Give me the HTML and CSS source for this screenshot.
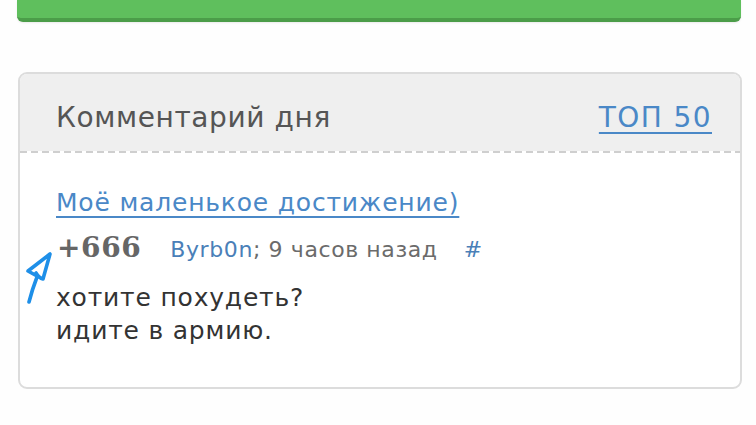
FILE: index.html
```html
<!DOCTYPE html>
<html lang="ru">
<head>
<meta charset="utf-8">
<link rel="stylesheet" href="styles.css">
</head>
<body>
<div class="page">
  <div class="green-bar"></div>
  <section class="widget">
    <header class="widget-head">
      <h2 class="widget-title">Комментарий дня</h2>
      <a class="top-link" href="#">ТОП 50</a>
    </header>
    <div class="dash"></div>
    <div class="widget-body">
      <a class="post-link" href="#">Моё маленькое достижение)</a>
      <div class="meta">
        <span class="rating">+666</span>
        <span class="author"><a href="#" class="user">Byrb0n</a>; 9 часов назад</span>
        <a href="#" class="hash">#</a>
        <svg class="scribble" width="32" height="56" viewBox="0 0 32 56">
          <path d="M4,52 Q7,40 12,27 M12,26 L3,21 L25,4 L18,29 Q14,28 11,23" fill="none" stroke="#1e8fe8" stroke-width="3.6" stroke-linecap="round" stroke-linejoin="round"/>
        </svg>
      </div>
      <p class="comment">хотите похудеть?<br>идите в армию.</p>
    </div>
  </section>
</div>
</body>
</html>
```

FILE: styles.css
```css
html, body {
  margin: 0;
  padding: 0;
  background: #fefefe;
}
.page {
  padding: 0 15px 0 17px;
  font-family: "DejaVu Sans", Verdana, sans-serif;
}
.green-bar {
  height: 18px;
  background: #5fbf5d;
  border-bottom: 4px solid #4b9d49;
  border-radius: 0 0 6px 6px;
  box-shadow: 0 1px 2px rgba(0,0,0,0.08);
}
.widget {
  margin-top: 50px;
  margin-left: 1px;
  width: 720px;
  border: 2px solid #dcdcdc;
  border-radius: 9px;
  overflow: hidden;
  background: #fff;
}
.widget-head {
  background: #efefef;
  height: 77px;
  display: flex;
  align-items: center;
  justify-content: space-between;
  padding: 9px 28px 0 36px;
  box-sizing: border-box;
}
.widget-title {
  margin: 0;
  font-weight: normal;
  font-size: 28px;
  letter-spacing: 0.6px;
  color: #555;
}
.top-link {
  font-size: 28px;
  letter-spacing: 1.4px;
  color: #4a88c7;
  text-decoration: underline;
  text-underline-offset: 5px;
  text-decoration-thickness: 2px;
}
.dash {
  height: 2px;
  background: repeating-linear-gradient(90deg, #cfcfcf 0 7px, transparent 7px 11px);
}
.widget-body {
  padding: 35px 36px 40px 36px;
}
.post-link {
  display: inline-block;
  font-size: 25px;
  line-height: 30px;
  letter-spacing: 0.8px;
  color: #4a88c7;
  text-decoration: underline;
  text-underline-offset: 5px;
  text-decoration-thickness: 2px;
}
.meta {
  display: flex;
  align-items: baseline;
  margin-top: 15px;
  line-height: 30px;
  position: relative;
}
.rating {
  font-family: "DejaVu Serif", Georgia, serif;
  font-weight: bold;
  font-size: 28px;
  letter-spacing: 0.6px;
  color: #666;
  margin-left: 1px;
  margin-right: 29px;
}
.author {
  font-size: 22px;
  letter-spacing: 0.6px;
  color: #6b6b6b;
}
.user {
  color: #4a7fb8;
  text-decoration: none;
}
.hash {
  font-size: 22px;
  color: #4a7fb8;
  text-decoration: none;
  margin-left: 26px;
}
.scribble {
  position: absolute;
  left: -31px;
  top: 17px;
}
.comment {
  margin: 16px 0 0 0;
  font-size: 25px;
  letter-spacing: 0.8px;
  line-height: 33px;
  color: #333;
}
```
